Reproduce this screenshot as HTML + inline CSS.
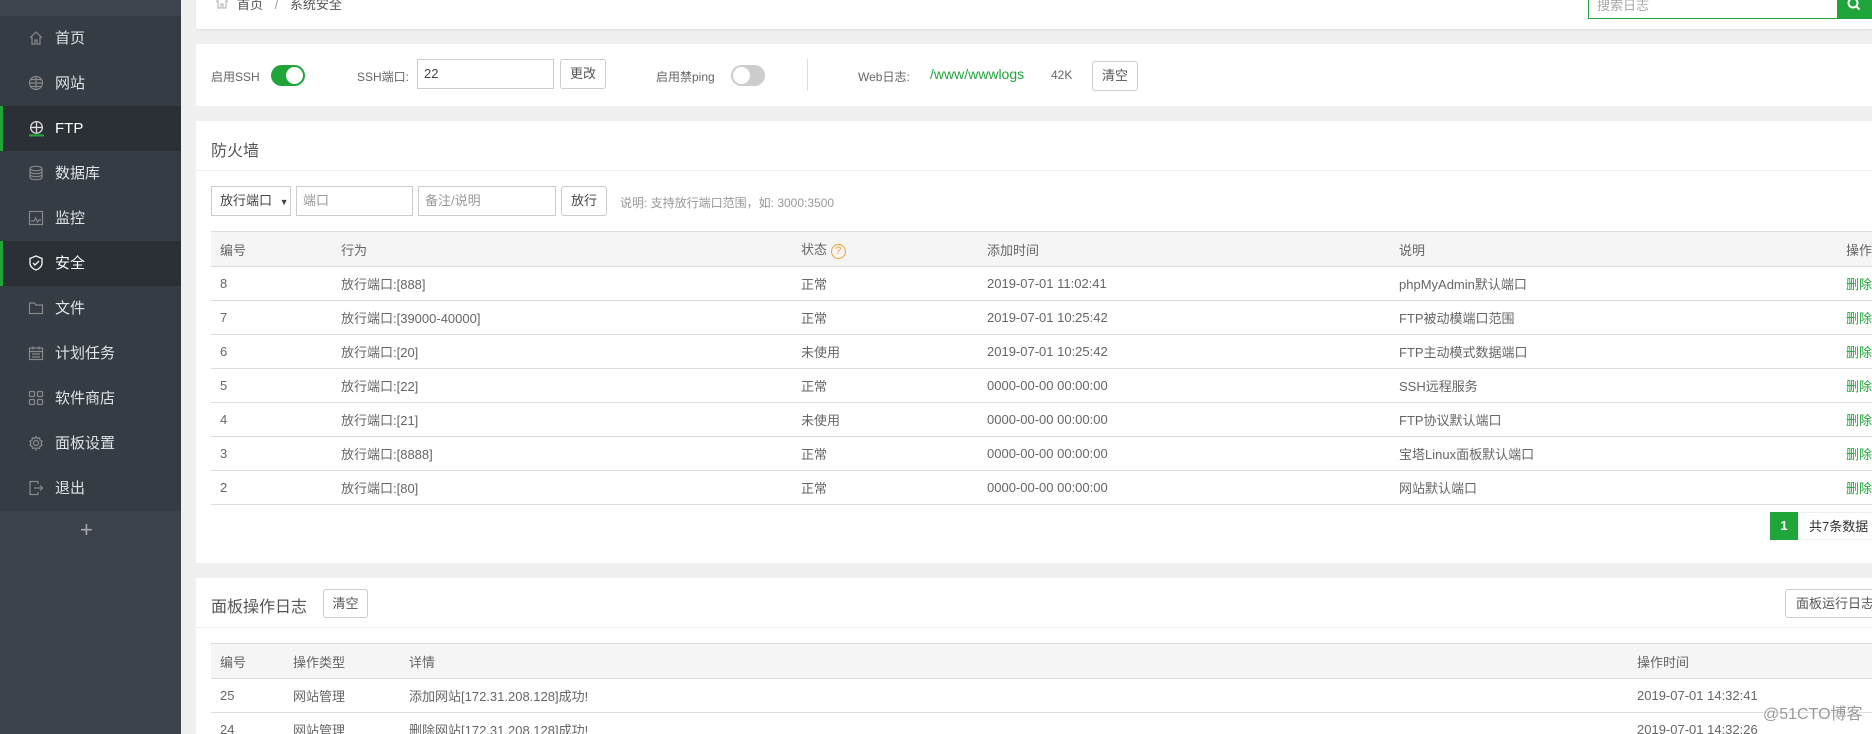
<!DOCTYPE html>
<html><head><meta charset="utf-8"><style>
*{margin:0;padding:0;box-sizing:border-box}
html,body{width:1872px;height:734px;overflow:hidden}
body{background:#f0f0f0;font-family:"Liberation Sans","Noto Sans CJK SC",sans-serif;color:#666;font-size:13px;position:relative}
.a{position:absolute}
.sb{left:0;top:0;width:181px;height:734px;background:#3c434b}
.sb .top{position:absolute;left:0;top:0;width:181px;height:16px;background:#3d444d}
.it{position:absolute;left:0;width:181px;height:45px;background:#353c44;color:#dfe3e6;font-size:15px;line-height:45px;padding-left:55px}
.it.on{background:#2b3037;color:#fff;border-left:3px solid #20a53a;padding-left:52px}
.it svg{position:absolute;left:28px;top:14px}
.it.on svg{left:25px}
.card{position:absolute;left:196px;right:0;background:#fff}
.btn{position:absolute;border:1px solid #ccc;border-radius:3px;background:#fff;color:#555;text-align:center;font-size:13px}
.inp{position:absolute;border:1px solid #ccc;background:#fff;padding-left:6px;color:#999;font-size:13px}
table{border-collapse:collapse;position:absolute;left:211px;width:1661px;font-size:13px;color:#666}
th{background:#f5f5f5;font-weight:normal;text-align:left;height:35px;border-top:1px solid #ddd;border-bottom:1px solid #ddd;padding-left:9px}
td{height:34px;border-bottom:1px solid #ddd;padding-left:9px}
.g{color:#20a53a}
</style></head><body>
<div class="a sb">
<div class="top"></div>
<div class="it" style="top:16px"><svg width="16" height="16" viewBox="0 0 16 16" fill="none" stroke="#888" stroke-width="1.2"><path d="M2 8L8 2l6 6M4 7v7h3v-4h2v4h3V7"/></svg>首页</div>
<div class="it" style="top:61px"><svg width="16" height="16" viewBox="0 0 16 16" fill="none" stroke="#888" stroke-width="1.2"><circle cx="8" cy="8" r="6.5"/><path d="M1.5 8h13M8 1.5v13M3 4.5h10M3 11.5h10"/></svg>网站</div>
<div class="it on" style="top:106px"><svg width="17" height="17" viewBox="0 0 16 16" fill="none" stroke="#ddd" stroke-width="1.2"><circle cx="8" cy="7" r="5.5"/><path d="M2.5 7h11M8 1.5v11"/><path d="M1 14.5h14" stroke="#20a53a" stroke-width="2"/></svg>FTP</div>
<div class="it" style="top:151px"><svg width="16" height="16" viewBox="0 0 16 16" fill="none" stroke="#888" stroke-width="1.2"><ellipse cx="8" cy="3.5" rx="6" ry="2.2"/><path d="M2 3.5v9c0 1.2 2.7 2.2 6 2.2s6-1 6-2.2v-9M2 6.5c0 1.2 2.7 2.2 6 2.2s6-1 6-2.2M2 9.5c0 1.2 2.7 2.2 6 2.2s6-1 6-2.2"/></svg>数据库</div>
<div class="it" style="top:196px"><svg width="16" height="16" viewBox="0 0 16 16" fill="none" stroke="#888" stroke-width="1.2"><rect x="1.5" y="1.5" width="13" height="13"/><path d="M3 11h3l1.5-3 2 4 1.5-2H13"/></svg>监控</div>
<div class="it on" style="top:241px"><svg width="16" height="16" viewBox="0 0 16 16" fill="none" stroke="#eee" stroke-width="1.4"><path d="M8 1l6 2.5V8c0 3.5-3 6-6 7-3-1-6-3.5-6-7V3.5z"/><path d="M5 8l2 2 4-4"/></svg>安全</div>
<div class="it" style="top:286px"><svg width="16" height="16" viewBox="0 0 16 16" fill="none" stroke="#888" stroke-width="1.2"><path d="M1.5 3h5l1.5 2h6.5v8.5h-13z"/></svg>文件</div>
<div class="it" style="top:331px"><svg width="16" height="16" viewBox="0 0 16 16" fill="none" stroke="#888" stroke-width="1.2"><rect x="1.5" y="3" width="13" height="11.5"/><path d="M1.5 6.5h13M5 1.5v3M11 1.5v3M4 9h8M4 12h8"/></svg>计划任务</div>
<div class="it" style="top:376px"><svg width="16" height="16" viewBox="0 0 16 16" fill="none" stroke="#888" stroke-width="1.3"><rect x="1.5" y="1.5" width="5" height="5" rx="1"/><rect x="9.5" y="1.5" width="5" height="5" rx="1"/><rect x="1.5" y="9.5" width="5" height="5" rx="1"/><rect x="9.5" y="9.5" width="5" height="5" rx="1"/></svg>软件商店</div>
<div class="it" style="top:421px"><svg width="16" height="16" viewBox="0 0 16 16" fill="none" stroke="#888" stroke-width="1.2"><circle cx="8" cy="8" r="2.5"/><path d="M8 1.5l1.3 2 2.3-.6.4 2.3 2.2 1-1.2 2 1.2 2-2.2 1-.4 2.3-2.3-.6-1.3 2-1.3-2-2.3.6-.4-2.3-2.2-1 1.2-2-1.2-2 2.2-1 .4-2.3 2.3.6z"/></svg>面板设置</div>
<div class="it" style="top:466px"><svg width="16" height="16" viewBox="0 0 16 16" fill="none" stroke="#888" stroke-width="1.2"><path d="M10 4V1.5H2v13h8V12M6 8h8.5M12 5.5L14.5 8 12 10.5"/></svg>退出</div>
<div class="a" style="left:80px;top:518px;color:#aaa;font-size:22px;line-height:24px">+</div>
</div>

<div class="card" style="top:0;height:29px;box-shadow:0 1px 2px rgba(0,0,0,.08)">
<svg class="a" style="left:18px;top:-6px" width="16" height="16" viewBox="0 0 16 16" fill="none" stroke="#bbb" stroke-width="1.2"><path d="M2 8L8 2l6 6M4 7v7h3v-4h2v4h3V7"/></svg>
<div class="a" style="left:41px;top:-6px;font-size:13px;color:#555">首页 <span style="color:#999;margin:0 8px">/</span> 系统安全</div>
<div class="a" style="left:1392px;top:-12px;width:250px;height:31px;border:1px solid #20a53a;padding:6px 0 0 8px;color:#aaa;font-size:13px">搜索日志</div>
<div class="a" style="left:1641px;top:-12px;width:35px;height:31px;background:#20a53a"><svg style="position:absolute;left:9px;top:10px" width="16" height="16" viewBox="0 0 16 16" fill="none" stroke="#fff" stroke-width="2"><circle cx="7" cy="5" r="4.5"/><path d="M10.5 8.5l3 3"/></svg></div>
</div>

<div class="card" style="top:44px;height:62px">
<div class="a" style="left:15px;top:24px;font-size:12px">启用SSH</div>
<div class="a" style="left:75px;top:21px;width:34px;height:21px;border-radius:11px;background:#20a53a"><div class="a" style="right:2px;top:2px;width:17px;height:17px;border-radius:50%;background:#fff"></div></div>
<div class="a" style="left:161px;top:24px;font-size:12px">SSH端口:</div>
<div class="inp" style="left:221px;top:15px;width:137px;height:30px;line-height:28px;color:#444">22</div>
<div class="btn" style="left:364px;top:15px;width:46px;height:30px;line-height:28px">更改</div>
<div class="a" style="left:460px;top:24px;font-size:12px">启用禁ping</div>
<div class="a" style="left:535px;top:21px;width:34px;height:21px;border-radius:11px;background:#ccc"><div class="a" style="left:2px;top:2px;width:17px;height:17px;border-radius:50%;background:#fff"></div></div>
<div class="a" style="left:611px;top:15px;width:1px;height:32px;background:#ddd"></div>
<div class="a" style="left:662px;top:24px;font-size:12px">Web日志:</div>
<div class="a g" style="left:734px;top:22px;font-size:14px">/www/wwwlogs</div>
<div class="a" style="left:855px;top:24px;font-size:12px">42K</div>
<div class="btn" style="left:896px;top:17px;width:46px;height:30px;line-height:28px">清空</div>
</div>

<div class="card" style="top:121px;height:442px">
<div class="a" style="left:15px;top:16px;font-size:16px;color:#555">防火墙</div>
<div class="a" style="left:0;right:0;top:49px;height:1px;background:#eee"></div>
<div class="btn" style="left:15px;top:65px;width:80px;height:30px;line-height:28px;border-radius:0;text-align:left;padding-left:8px;color:#444">放行端口 <span style="font-size:9px;margin-left:4px">▼</span></div>
<div class="inp" style="left:100px;top:65px;width:117px;height:30px;line-height:28px">端口</div>
<div class="inp" style="left:222px;top:65px;width:138px;height:30px;line-height:28px">备注/说明</div>
<div class="btn" style="left:365px;top:65px;width:46px;height:30px;line-height:28px;color:#444">放行</div>
<div class="a" style="left:424px;top:73px;font-size:12px;color:#999">说明: 支持放行端口范围，如: 3000:3500</div>
<div class="a" style="left:1574px;top:391px;width:28px;height:28px;background:#20a53a;color:#fff;text-align:center;line-height:28px;font-weight:bold">1</div>
<div class="a" style="left:1602px;top:391px;width:80px;height:28px;line-height:28px;padding-left:10px;color:#333;border:1px solid #eee;font-size:13px">共7条数据</div>
</div>
<table style="top:231px">
<tr><th style="width:121px">编号</th><th style="width:460px">行为</th><th style="width:186px">状态 <span style="display:inline-block;width:15px;height:15px;border:1px solid #f0a030;border-radius:50%;color:#f0a030;font-size:11px;text-align:center;line-height:13px">?</span></th><th style="width:412px">添加时间</th><th style="width:447px">说明</th><th>操作</th></tr>
<tr><td>8</td><td>放行端口:[888]</td><td>正常</td><td>2019-07-01 11:02:41</td><td>phpMyAdmin默认端口</td><td class="g">删除</td></tr>
<tr><td>7</td><td>放行端口:[39000-40000]</td><td>正常</td><td>2019-07-01 10:25:42</td><td>FTP被动模端口范围</td><td class="g">删除</td></tr>
<tr><td>6</td><td>放行端口:[20]</td><td>未使用</td><td>2019-07-01 10:25:42</td><td>FTP主动模式数据端口</td><td class="g">删除</td></tr>
<tr><td>5</td><td>放行端口:[22]</td><td>正常</td><td>0000-00-00 00:00:00</td><td>SSH远程服务</td><td class="g">删除</td></tr>
<tr><td>4</td><td>放行端口:[21]</td><td>未使用</td><td>0000-00-00 00:00:00</td><td>FTP协议默认端口</td><td class="g">删除</td></tr>
<tr><td>3</td><td>放行端口:[8888]</td><td>正常</td><td>0000-00-00 00:00:00</td><td>宝塔Linux面板默认端口</td><td class="g">删除</td></tr>
<tr><td>2</td><td>放行端口:[80]</td><td>正常</td><td>0000-00-00 00:00:00</td><td>网站默认端口</td><td class="g">删除</td></tr>
</table>

<div class="card" style="top:578px;height:156px">
<div class="a" style="left:15px;top:15px;font-size:16px;color:#555">面板操作日志</div>
<div class="btn" style="left:127px;top:11px;width:45px;height:29px;line-height:27px">清空</div>
<div class="btn" style="left:1589px;top:11px;width:90px;height:29px;line-height:27px;text-align:left;padding-left:10px">面板运行日志</div>
<div class="a" style="left:0;right:0;top:49px;height:1px;background:#eee"></div>
</div>
<table style="top:643px">
<tr><th style="width:73px">编号</th><th style="width:116px">操作类型</th><th style="width:1228px">详情</th><th>操作时间</th></tr>
<tr><td>25</td><td>网站管理</td><td>添加网站[172.31.208.128]成功!</td><td>2019-07-01 14:32:41</td></tr>
<tr><td>24</td><td>网站管理</td><td>删除网站[172.31.208.128]成功!</td><td>2019-07-01 14:32:26</td></tr>
</table>
<div class="a" style="left:1763px;top:700px;font-size:16px;color:#999;text-shadow:0 0 2px #fff">@51CTO博客</div>
</body></html>
